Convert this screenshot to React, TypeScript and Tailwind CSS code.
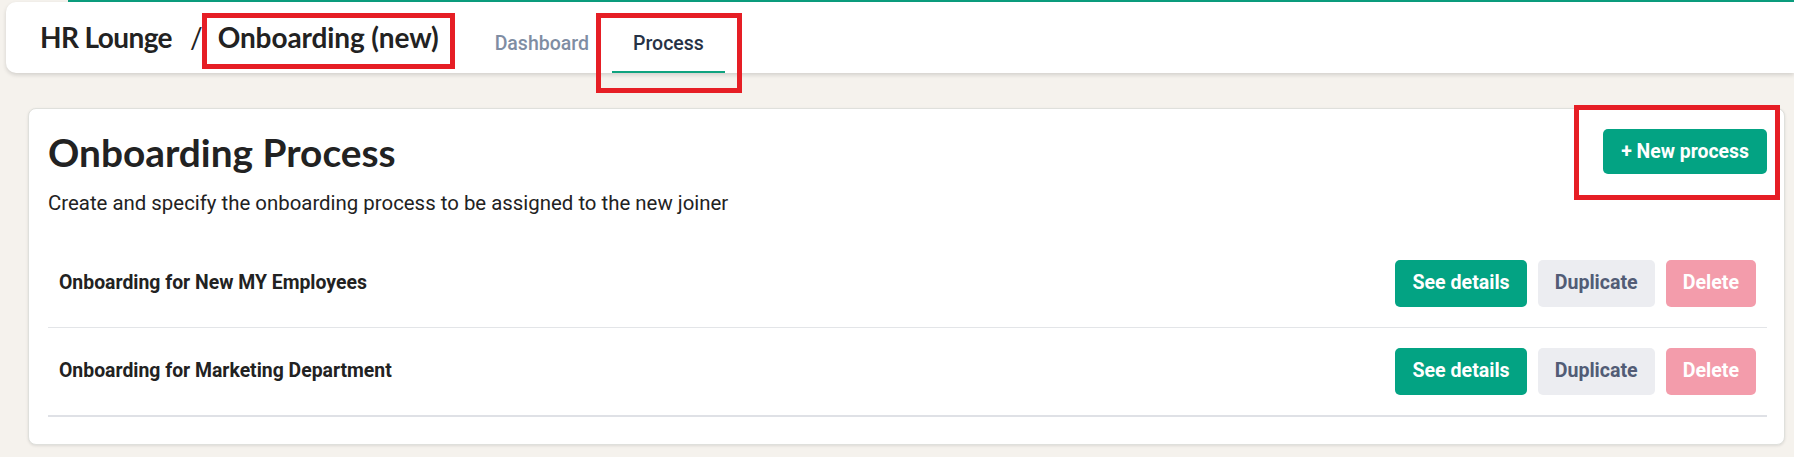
import React from "react";

const rows = ["Onboarding for New MY Employees", "Onboarding for Marketing Department"];

export default function App() {
  return (
    <div className="relative min-h-[457px] w-full overflow-hidden bg-[#f5f2ed] font-['Roboto',sans-serif] pb-[12px]">
      <div className="ml-[68px] h-[2px] bg-[#0b9e7e]" />
      <header className="ml-[6px] flex h-[71px] items-center rounded-bl-[10px] rounded-tl-[10px] bg-white pl-[34px] shadow-[0_2px_4px_rgba(0,0,0,0.14)]">
        <div className="mt-[-2px] flex items-center font-['Lato',sans-serif] text-[28px] font-bold text-[#222222]">
          <span className="tracking-[-0.6px]">HR Lounge</span>
          <span className="ml-[18px] mr-[15px] font-normal">/</span>
          <span className="tracking-[-0.1px]">Onboarding (new)</span>
        </div>
        <nav className="ml-[35px] flex h-[56px] self-end">
          <div className="flex items-center border-b-2 border-transparent px-[21px] text-[19.5px] font-medium text-[#7f8da3]">
            Dashboard
          </div>
          <div className="ml-[2px] flex items-center border-b-2 border-[#10a37f] px-[21px] text-[19.5px] font-medium text-[#263246]">
            Process
          </div>
        </nav>
      </header>

      <main className="ml-[28px] mr-[9px] mt-[35px] rounded-[8px] border border-[#dfe0dc] bg-white pb-[27px] pl-[19px] pr-[17px] pt-[20px] shadow-[0_1px_3px_rgba(0,0,0,0.10)]">
        <div className="flex items-start justify-between">
          <div>
            <h1 className="font-['Lato',sans-serif] text-[38.8px] font-bold leading-[1.2] text-[#222222]">
              Onboarding Process
            </h1>
            <p className="mt-[14px] text-[20.4px] leading-[27px] text-[#222222]">
              Create and specify the onboarding process to be assigned to the new joiner
            </p>
          </div>
          <button className="h-[45px] rounded-[5px] bg-[#03a383] px-[18px] text-[19.4px] font-bold text-white">
            + New process
          </button>
        </div>

        <div className="mt-[23px]">
          {rows.map((r, i) => (
            <div
              key={r}
              className={`flex items-center justify-between px-[11px] py-[20px] ${
                i === rows.length - 1 ? "border-b-2 border-[#dfe1e6]" : "border-b border-[#e3e5e8]"
              }`}
            >
              <span className="text-[19.4px] font-bold text-[#222222]">{r}</span>
              <div className="flex gap-[11px]">
                <button className="h-[47px] rounded-[5px] bg-[#03a383] px-[17px] text-[19.6px] font-bold text-white">
                  See details
                </button>
                <button className="h-[47px] rounded-[5px] bg-[#ecedf1] px-[17px] text-[19.6px] font-bold text-[#525c76]">
                  Duplicate
                </button>
                <button className="h-[47px] rounded-[5px] bg-[#f39cab] px-[17px] text-[19.6px] font-bold text-white">
                  Delete
                </button>
              </div>
            </div>
          ))}
        </div>
      </main>

      <div className="pointer-events-none absolute left-[202px] top-[13px] h-[56px] w-[253px] border-[5px] border-[#e61e25]" />
      <div className="pointer-events-none absolute left-[596px] top-[13px] h-[80px] w-[146px] border-[5px] border-[#e61e25]" />
      <div className="pointer-events-none absolute left-[1574px] top-[105px] h-[95px] w-[206px] border-[5px] border-[#e61e25]" />
    </div>
  );
}
